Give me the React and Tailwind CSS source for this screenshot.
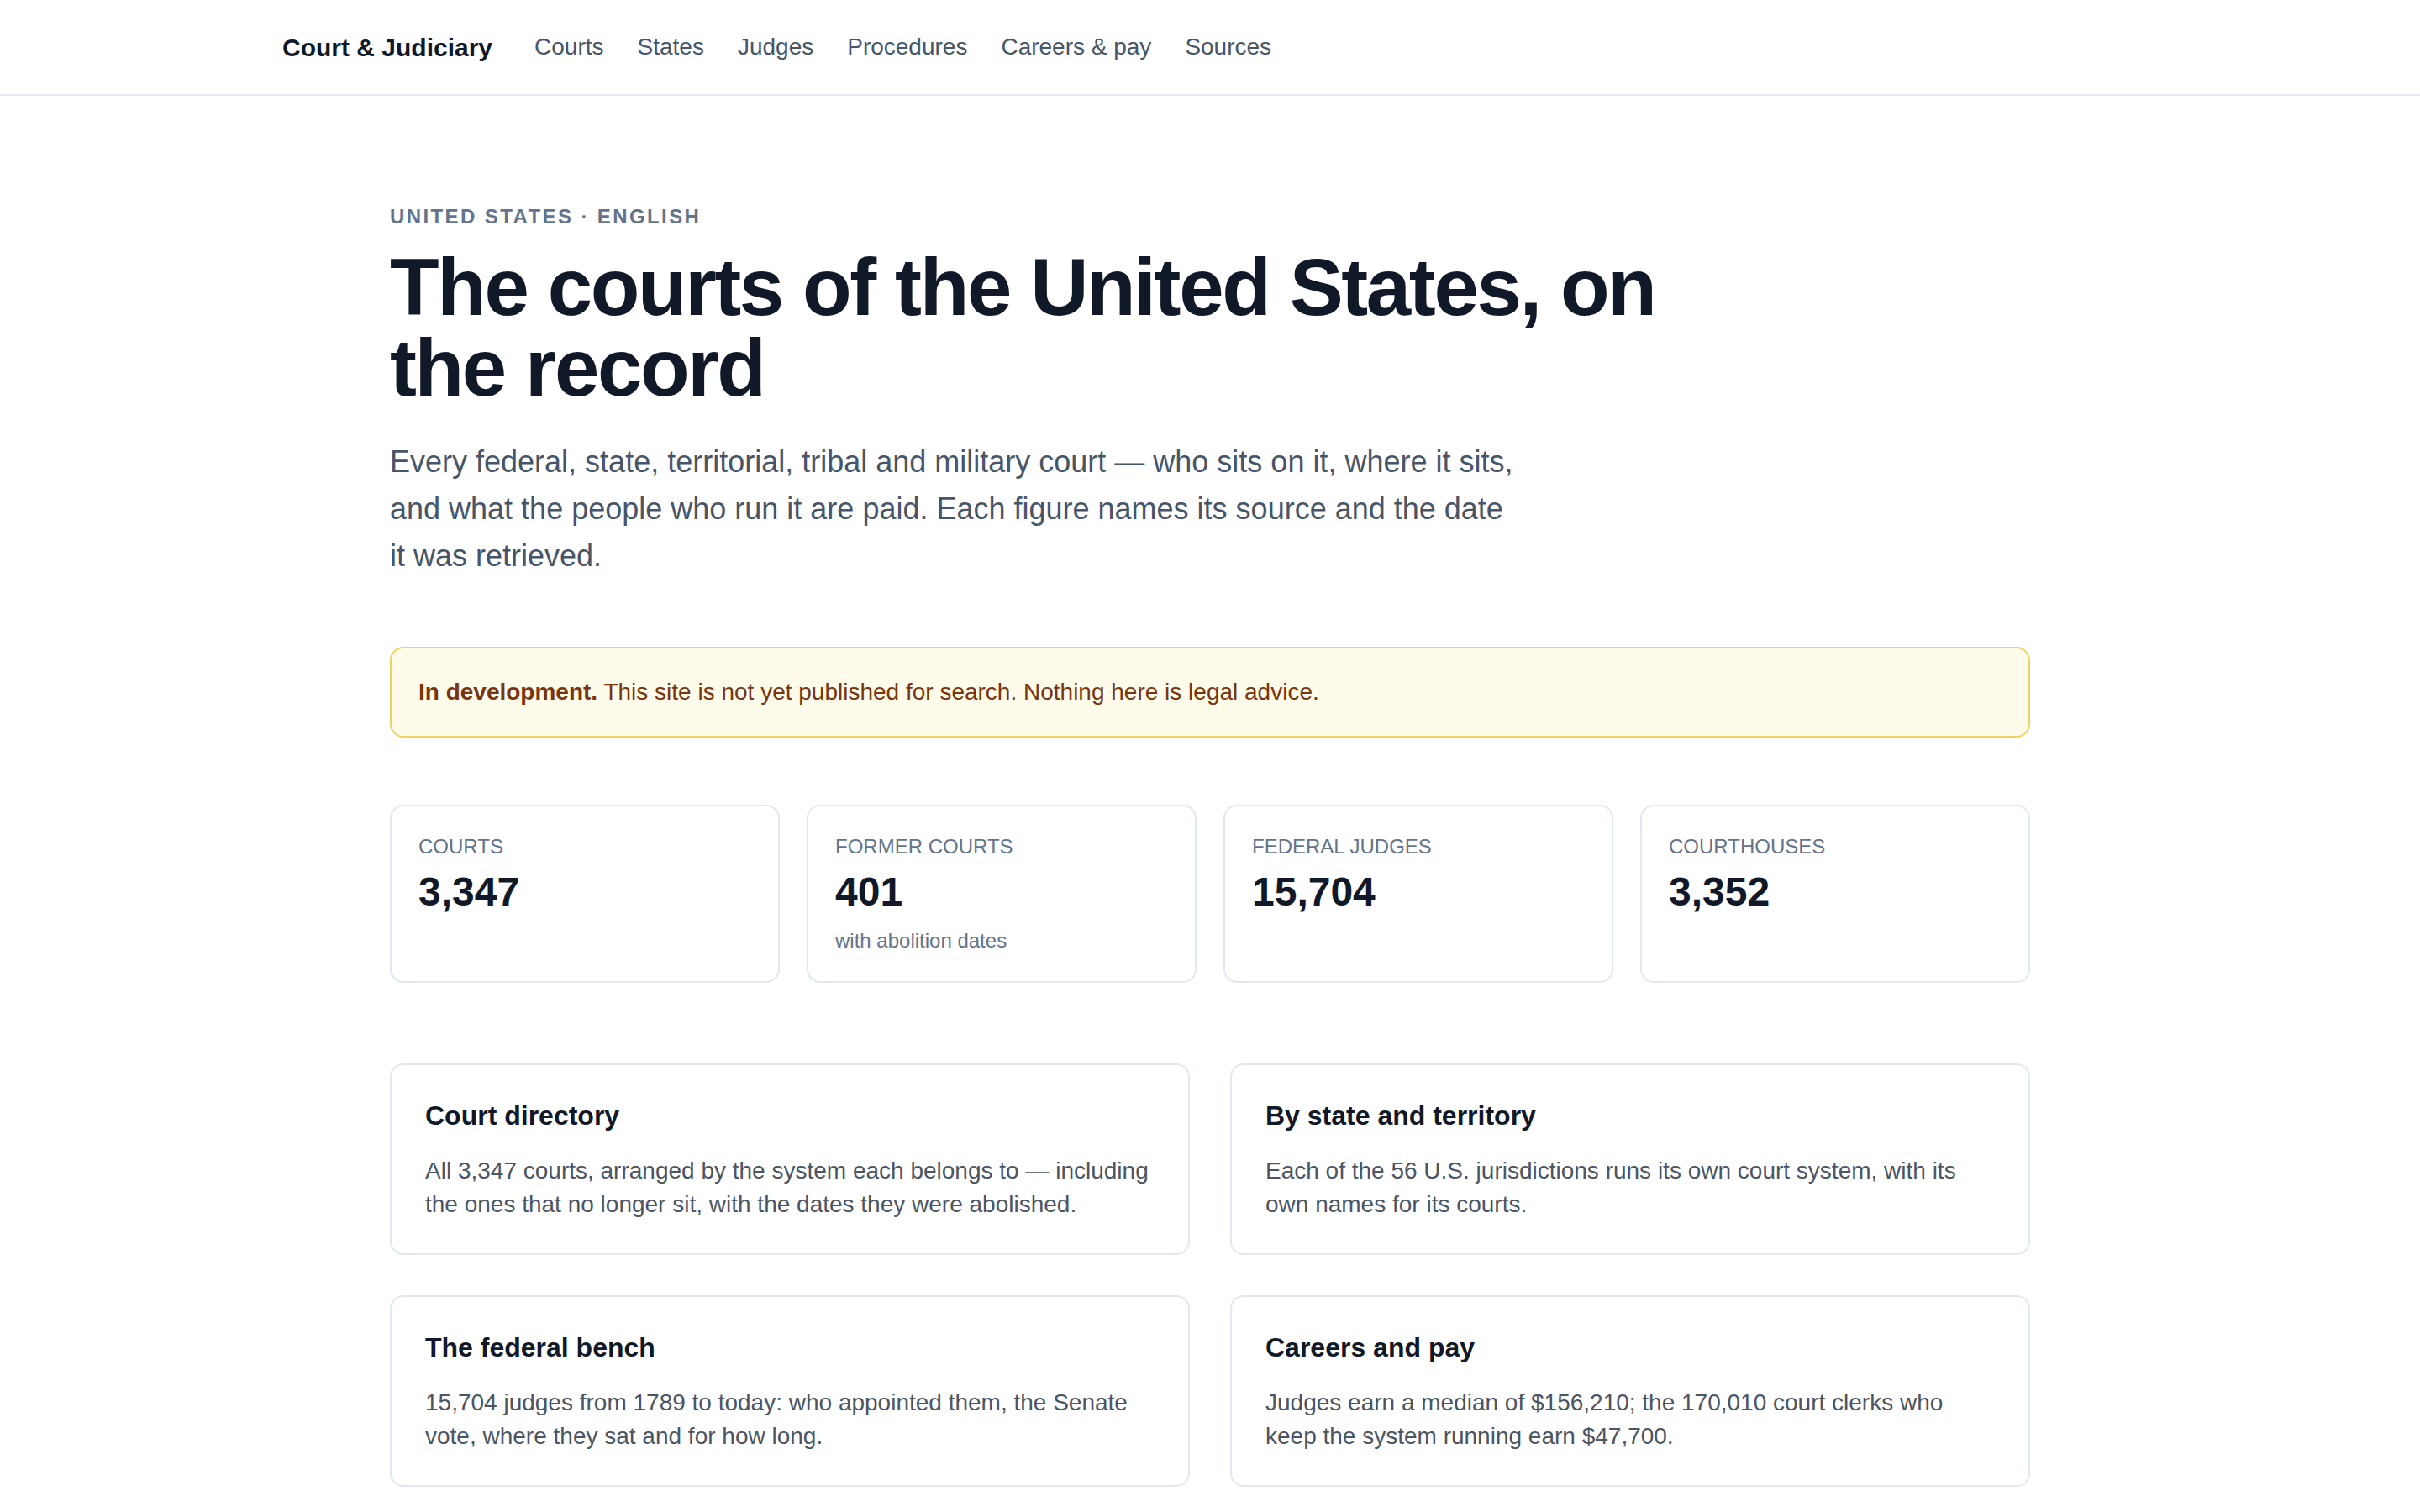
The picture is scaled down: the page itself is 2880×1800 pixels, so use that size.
const navLinks = ["Courts", "States", "Judges", "Procedures", "Careers & pay", "Sources"];

const stats = [
  { label: "Courts", value: "3,347" },
  { label: "Former courts", value: "401", note: "with abolition dates" },
  { label: "Federal judges", value: "15,704" },
  { label: "Courthouses", value: "3,352" },
];

const sections = [
  {
    title: "Court directory",
    body: "All 3,347 courts, arranged by the system each belongs to — including the ones that no longer sit, with the dates they were abolished.",
  },
  {
    title: "By state and territory",
    body: "Each of the 56 U.S. jurisdictions runs its own court system, with its own names for its courts.",
  },
  {
    title: "The federal bench",
    body: "15,704 judges from 1789 to today: who appointed them, the Senate vote, where they sat and for how long.",
  },
  {
    title: "Careers and pay",
    body: "Judges earn a median of $156,210; the 170,010 court clerks who keep the system running earn $47,700.",
  },
];

export default function App() {
  return (
    <div className="min-h-screen bg-white font-['Liberation_Sans',Arial,sans-serif] text-[#111827]">
      {/* --- NAV --- */}
      <header className="border-b-2 border-[#e2e8f0]">
        <div className="max-w-[2304px] mx-auto px-12 h-28 flex items-center gap-[50px]">
          <a href="#" className="text-[30px] font-bold text-[#111827]">Court &amp; Judiciary</a>
          <nav className="flex items-center gap-10 text-[28px] text-[#475569]">
            {navLinks.map((link) => (
              <a key={link} href="#" className="hover:text-[#111827]">{link}</a>
            ))}
          </nav>
        </div>
      </header>

      <main className="max-w-[2048px] mx-auto px-12 pt-32 pb-32">
        {/* Hero */}
        <p className="text-2xl font-semibold uppercase tracking-widest text-[#64748b]">United States · English</p>
        <h1 className="mt-5 max-w-[1536px] text-8xl leading-none font-bold tracking-tight text-[#111827]">
          The courts of the United States, on the record
        </h1>
        <p className="mt-9 max-w-[1344px] text-4xl leading-14 text-[#475569]">
          Every federal, state, territorial, tribal and military court — who sits on it, where it sits, and what the people who run it are paid. Each figure names its source and the date it was retrieved.
        </p>

        {/* Notice */}
        <div className="mt-20 rounded-2xl border-2 border-[#efd35f] bg-[#fefbea] p-8 text-[28px] leading-10 text-[#78350f]">
          <strong className="font-bold">In development.</strong> This site is not yet published for search. Nothing here is legal advice.
        </div>

        {/* Stats */}
        <div className="mt-20 grid grid-cols-4 gap-8">
          {stats.map((s) => (
            <div key={s.label} className="rounded-2xl border-2 border-[#e2e8f0] p-8">
              <div className="text-2xl uppercase text-[#64748b]">{s.label}</div>
              <div className="mt-1.5 text-5xl leading-16 font-bold text-[#111827]">{s.value}</div>
              {s.note && <div className="mt-2.5 text-2xl text-[#64748b]">{s.note}</div>}
            </div>
          ))}
        </div>

        {/* Sections */}
        <div className="mt-24 grid grid-cols-2 gap-12">
          {sections.map((c) => (
            <a key={c.title} href="#" className="block rounded-2xl border-2 border-[#e2e8f0] px-10 pt-[38px] pb-[38px] hover:border-[#cbd5e1]">
              <h2 className="text-[32px] leading-11 font-semibold text-[#111827]">{c.title}</h2>
              <p className="mt-6 text-[28px] leading-10 text-[#4b5563]">{c.body}</p>
            </a>
          ))}
        </div>
      </main>
    </div>
  );
}
